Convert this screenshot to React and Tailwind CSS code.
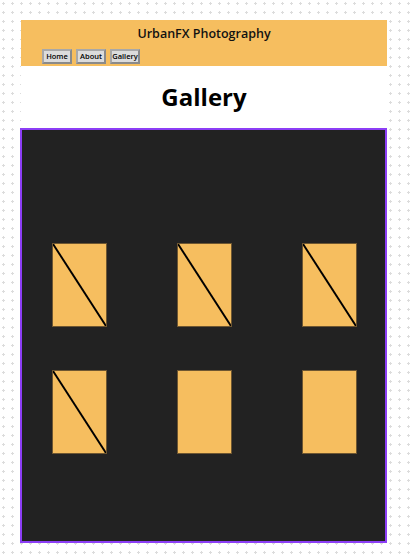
const photos = [
  { id: 1, broken: true },
  { id: 2, broken: true },
  { id: 3, broken: true },
  { id: 4, broken: true },
  { id: 5, broken: false },
  { id: 6, broken: false },
];

const Photo = ({ broken }) => (
  <div className="relative w-[55px] h-[84px] bg-[#f6be5f] border border-[#6e5631]">
    {broken && (
      <svg className="absolute inset-0 w-full h-full" viewBox="0 0 55 84" preserveAspectRatio="none">
        <line x1="0" y1="0" x2="55" y2="84" stroke="#000" strokeWidth="2" />
      </svg>
    )}
  </div>
);

const NavButton = ({ children }) => (
  <button className="h-[15px] w-[30px] bg-[#dcdcdc] border-2 border-[#8a8a8a] border-t-[#a8a8a8] border-l-[#a8a8a8] text-[7.5px] font-semibold text-black leading-none flex items-center justify-center">
    {children}
  </button>
);

export default function App() {
  return (
    <div className="h-[556px] w-full bg-white bg-[radial-gradient(circle,#dcdcdc_1px,transparent_1.2px)] bg-[size:9px_9px] bg-[position:-1px_-1px] pt-[20px] font-['Open_Sans',sans-serif]">
      <div className="ml-[21px] w-[366px] bg-white">
        <header className="bg-[#f6be5f] h-[46px]">
          <div className="h-[28px] leading-[28px] text-center text-[12.5px] font-semibold text-[#111]">UrbanFX Photography</div>
          <nav className="mt-px pl-[21px] flex gap-[4px]">
            <NavButton>Home</NavButton>
            <NavButton>About</NavButton>
            <NavButton>Gallery</NavButton>
          </nav>
        </header>
        <h1 className="h-[62px] flex items-center justify-center text-[24px] font-bold text-black">Gallery</h1>
        <section className="-ml-px w-[367px] h-[415px] border-2 border-[#8c3ef5] bg-[#222222] pt-[113px] pl-[30px]">
          <div className="grid grid-cols-[55px_55px_55px] gap-x-[70px] gap-y-[43px]">
            {photos.map((p) => (
              <Photo key={p.id} broken={p.broken} />
            ))}
          </div>
        </section>
      </div>
    </div>
  );
}
